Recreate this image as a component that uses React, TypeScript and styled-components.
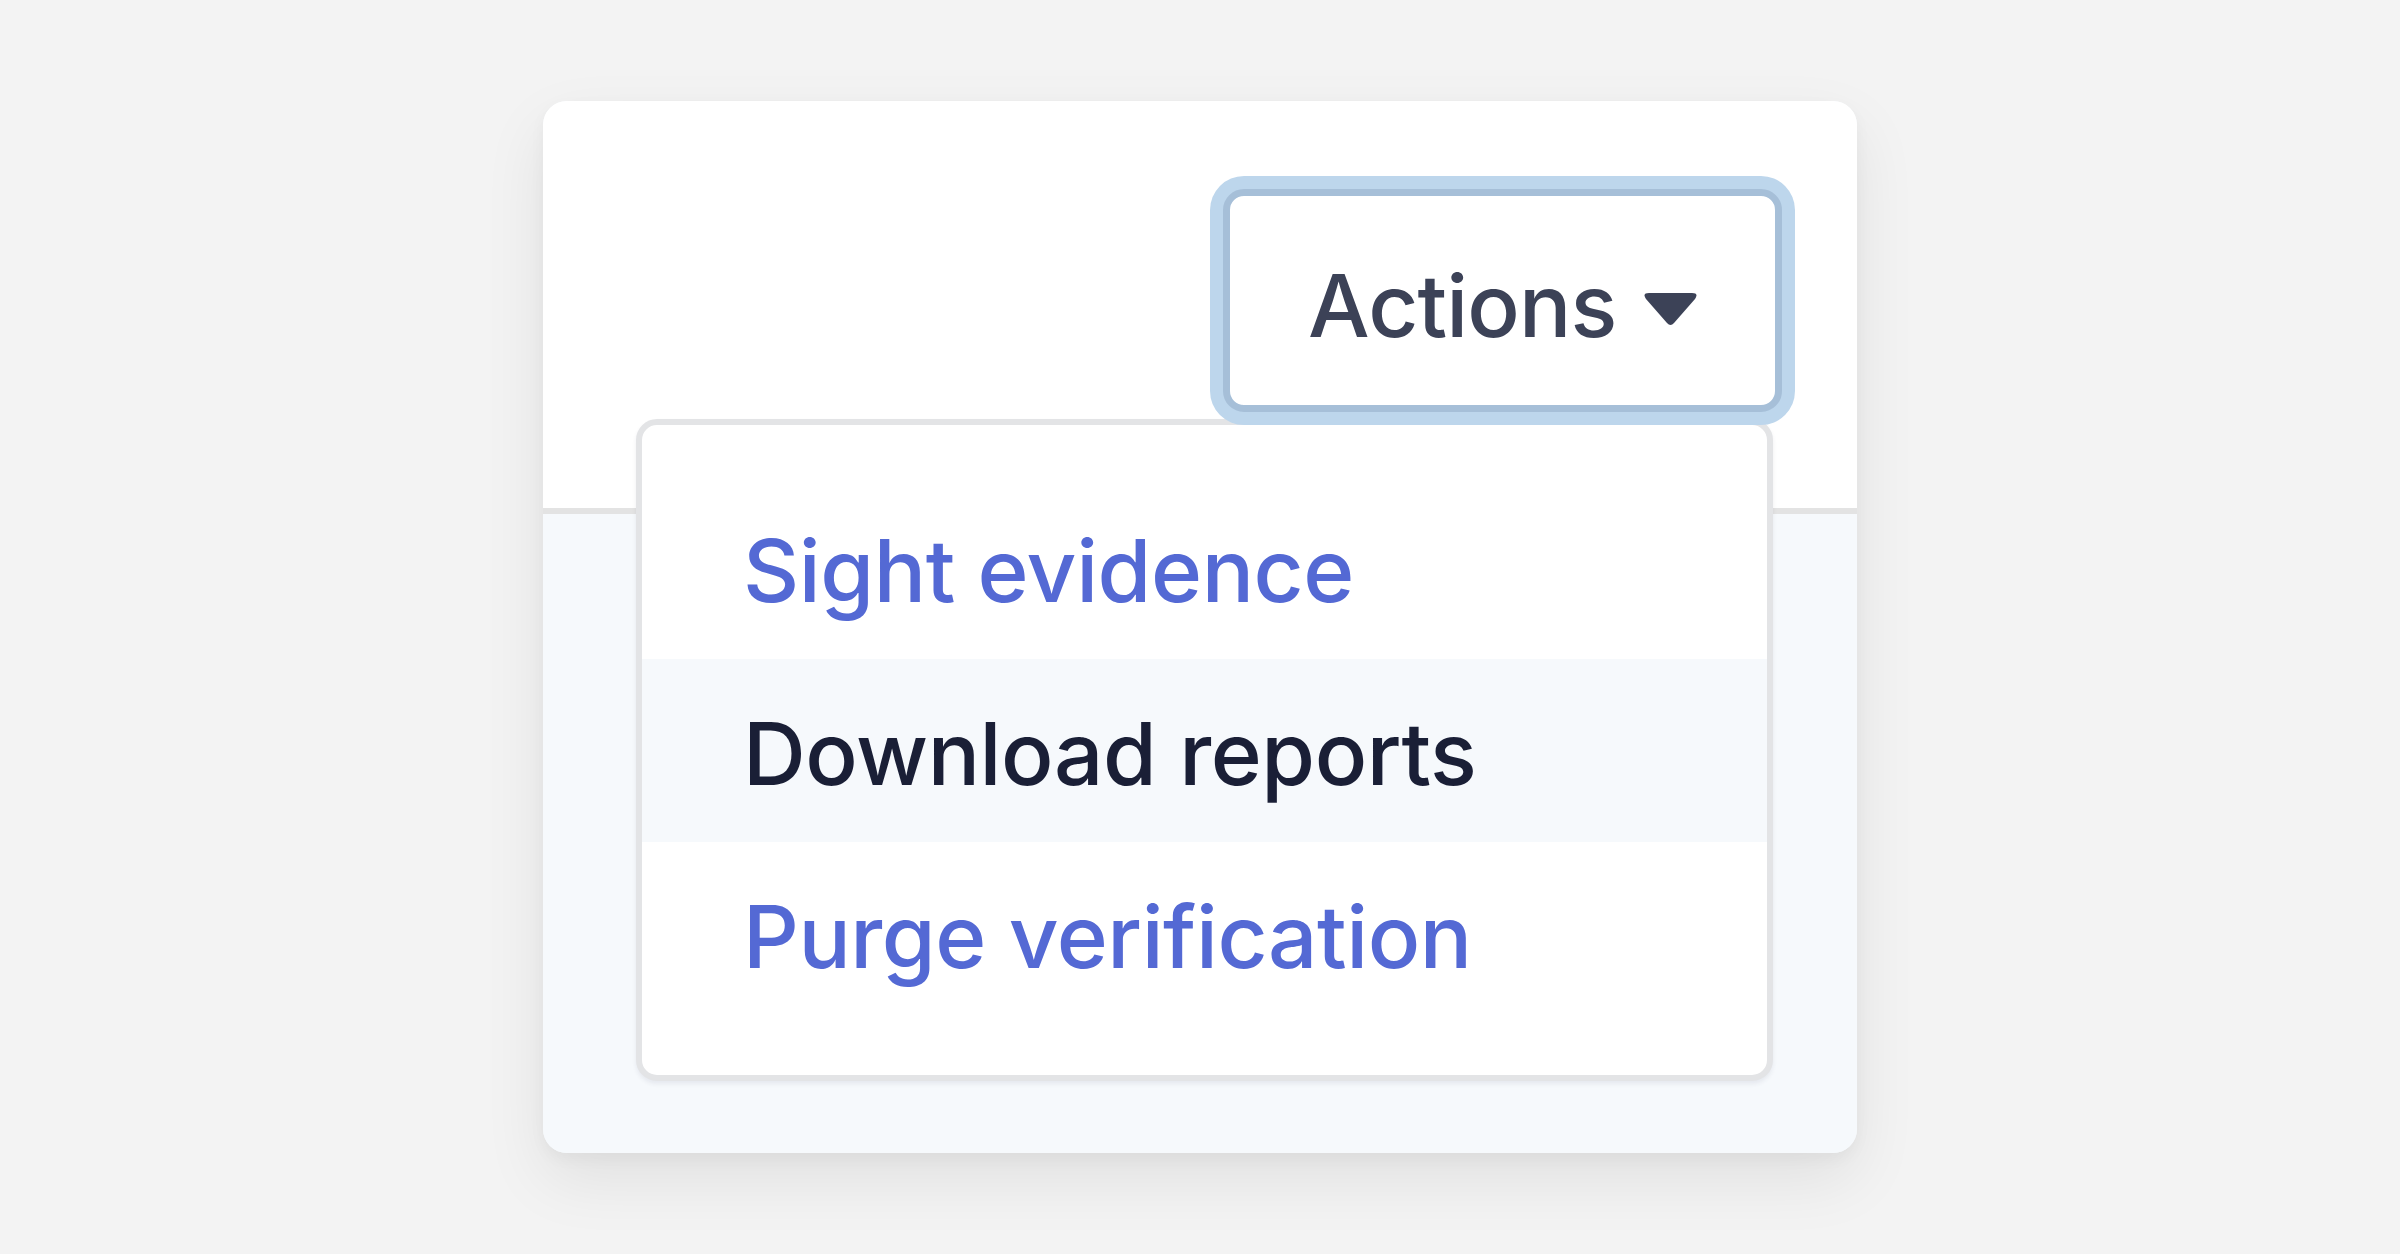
import React from "react";
import styled, { createGlobalStyle } from "styled-components";

const Global = createGlobalStyle`
  html, body { margin: 0; padding: 0; background: #f3f3f3; }
  body { font-family: Inter, "Noto Sans", "Liberation Sans", sans-serif; }
  * { box-sizing: border-box; }
`;

const Page = styled.main`
  min-height: 100vh;
  display: flex;
  align-items: center;
  justify-content: center;
  background: #f3f3f3;
`;

const Card = styled.section`
  position: relative;
  width: 1314px;
  height: 1052px;
  border-radius: 24px;
  background: #f6f9fc;
  box-shadow: 0 26px 64px rgba(0, 0, 0, 0.08), 0 6px 16px rgba(0, 0, 0, 0.04);
  display: flex;
  flex-direction: column;
`;

const Header = styled.header`
  height: 413px;
  flex: none;
  background: #ffffff;
  border-radius: 24px 24px 0 0;
  border-bottom: 6px solid #e3e3e3;
  display: flex;
  justify-content: flex-end;
  align-items: flex-start;
  padding: 88px 75px 0 0;
`;

const Body = styled.div`
  flex: 1;
  border-radius: 0 0 24px 24px;
  background: #f6f9fc;
`;

const ActionsWrap = styled.div`
  position: relative;
`;

const ActionsButton = styled.button`
  position: relative;
  z-index: 2;
  height: 223px;
  width: 559px;
  padding: 0 76px 0 78px;
  display: flex;
  align-items: center;
  justify-content: space-between;
  background: #ffffff;
  border: 7px solid #a6bfd8;
  border-radius: 21px;
  box-shadow: 0 0 0 13px #bdd6ec;
  font-family: Inter, "Noto Sans", "Liberation Sans", sans-serif;
  font-size: 87px;
  font-weight: 500;
  letter-spacing: -0.01em;
  color: #3c4257;
  cursor: pointer;
  outline: none;
`;

const ButtonLabel = styled.span`
  line-height: 1;
  padding-top: 10px;
`;

const Caret = styled.svg`
  width: 57px;
  height: 34px;
  margin-top: 16px;
  flex: none;
  display: block;
`;

const Menu = styled.ul`
  position: absolute;
  z-index: 1;
  top: calc(100% + 7px);
  right: 9px;
  width: 1137px;
  margin: 0;
  padding: 51px 0 50px;
  list-style: none;
  background: #ffffff;
  border: 6px solid #e3e4e6;
  border-radius: 21px;
  box-shadow: 0 3px 4px rgba(50, 50, 93, 0.08);
  overflow: hidden;
`;

const MenuItem = styled.li<{ $tone: "link" | "active" }>`
  height: 183px;
  display: flex;
  align-items: center;
  padding: 6px 0 0 101px;
  font-family: Inter, "Noto Sans", "Liberation Sans", sans-serif;
  font-size: 87px;
  font-weight: 500;
  letter-spacing: -0.005em;
  line-height: 1;
  color: ${(p) => (p.$tone === "active" ? "#1a1f36" : "#5469d4")};
  background: ${(p) => (p.$tone === "active" ? "#f6f9fc" : "#ffffff")};
`;

const items: { label: string; tone: "link" | "active" }[] = [
  { label: "Sight evidence", tone: "link" },
  { label: "Download reports", tone: "active" },
  { label: "Purge verification", tone: "link" },
];

export default function App() {
  return (
    <>
      <Global />
      <Page>
        <Card>
          <Header>
            <ActionsWrap>
              <ActionsButton type="button">
                <ButtonLabel>Actions</ButtonLabel>
                <Caret viewBox="0 0 57 34" aria-hidden="true">
                  <path
                    d="M7 1 H50 Q57 1 53 7 L32 31 Q28.5 35 25 31 L4 7 Q0 1 7 1 Z"
                    fill="#3c4257"
                  />
                </Caret>
              </ActionsButton>
              <Menu>
                {items.map((it) => (
                  <MenuItem key={it.label} $tone={it.tone}>
                    {it.label}
                  </MenuItem>
                ))}
              </Menu>
            </ActionsWrap>
          </Header>
          <Body />
        </Card>
      </Page>
    </>
  );
}
